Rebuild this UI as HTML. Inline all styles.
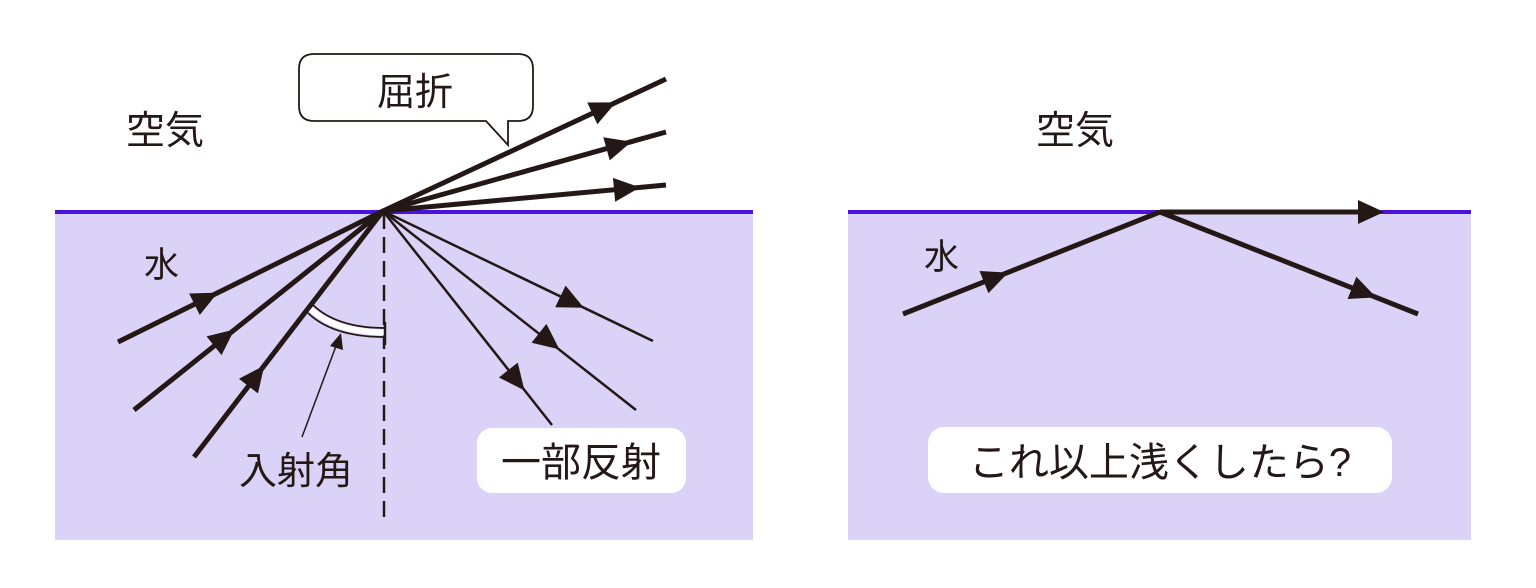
<!DOCTYPE html>
<html><head><meta charset="utf-8"><style>
html,body{margin:0;padding:0;background:#fff;width:1536px;height:588px;overflow:hidden}
svg{display:block}
text{font-family:"Liberation Sans","Noto Sans CJK JP",sans-serif;fill:#231815}
</style></head><body>
<svg width="1536" height="588" viewBox="0 0 1536 588" xmlns="http://www.w3.org/2000/svg">
<defs><polygon id="ah" points="-14,-12 12,0 -14,12" fill="#231815"/></defs>
<rect x="55" y="212" width="698" height="328" fill="#dbd3f7"/>
<rect x="848" y="212" width="623" height="328" fill="#dbd3f7"/>
<line x1="55" y1="212" x2="753" y2="212" stroke="#4b12dc" stroke-width="4"/>
<line x1="848" y1="212" x2="1471" y2="212" stroke="#4b12dc" stroke-width="4"/>

<line x1="384" y1="213" x2="384" y2="520" stroke="#231815" stroke-width="2.5" stroke-dasharray="16,8"/>
<g stroke="#231815" stroke-linecap="butt">
<line x1="118" y1="342" x2="383" y2="211" stroke-width="5"/>
<line x1="134" y1="410" x2="383" y2="211" stroke-width="5"/>
<line x1="194" y1="457" x2="383" y2="211" stroke-width="5"/>
<line x1="383" y1="211" x2="666" y2="79" stroke-width="5"/>
<line x1="383" y1="211" x2="666" y2="132" stroke-width="5"/>
<line x1="383" y1="211" x2="666" y2="185" stroke-width="5"/>
<line x1="383" y1="211" x2="653" y2="341" stroke-width="2.5"/>
<line x1="383" y1="211" x2="636" y2="410" stroke-width="2.5"/>
<line x1="383" y1="211" x2="552" y2="425" stroke-width="2.5"/>
</g>
<use href="#ah" transform="translate(207,298) rotate(-26.3)"/>
<use href="#ah" transform="translate(225,337) rotate(-38.6)"/>
<use href="#ah" transform="translate(257,375) rotate(-52.5)"/>
<use href="#ah" transform="translate(605,107.5) rotate(-25)"/>
<use href="#ah" transform="translate(620,145) rotate(-15.6)"/>
<use href="#ah" transform="translate(628,188.5) rotate(-5.2)"/>
<use href="#ah" transform="translate(573,302.5) rotate(25.7)"/>
<use href="#ah" transform="translate(550,342) rotate(38.2)"/>
<use href="#ah" transform="translate(517,381) rotate(51.7)"/>
<path d="M311,309 Q335,332 385,332.5" fill="none" stroke="#fff" stroke-width="6"/>
<path d="M313,305 Q337,328 385,328" fill="none" stroke="#231815" stroke-width="1.8"/>
<path d="M308,313 Q333,337 385,337" fill="none" stroke="#231815" stroke-width="1.8"/>
<line x1="385" y1="322" x2="385" y2="345" stroke="#231815" stroke-width="2.5"/>
<line x1="302" y1="437" x2="336" y2="346" stroke="#231815" stroke-width="1.5"/>
<polygon points="341,333 343,350 330,346" fill="#231815"/>

<path d="M314,54 H518 Q533,54 533,69 V106 Q533,121 518,121 H508 L508,145 L486,121 H314 Q299,121 299,106 V69 Q299,54 314,54 Z" fill="#fff" stroke="#231815" stroke-width="1.8"/>
<text x="415" y="105" font-size="38" text-anchor="middle">屈折</text>

<text x="126" y="144" font-size="39">空気</text>
<text x="144" y="277" font-size="35">水</text>
<text x="239" y="484" font-size="38">入射角</text>
<rect x="477" y="428" width="209" height="65" rx="15" fill="#fff"/>
<text x="581" y="476" font-size="40" text-anchor="middle">一部反射</text>

<g stroke="#231815" stroke-width="5">
<line x1="903" y1="314" x2="1160" y2="212"/>
<line x1="1160" y1="212" x2="1418" y2="314"/>
<line x1="1160" y1="212" x2="1372" y2="212"/>
</g>
<use href="#ah" transform="translate(997,277) rotate(-21.6)"/>
<use href="#ah" transform="translate(1365,293) rotate(21.6)"/>
<use href="#ah" transform="translate(1372,212)"/>
<text x="1036" y="144" font-size="39">空気</text>
<text x="924" y="269" font-size="35">水</text>
<rect x="928" y="427" width="464" height="66" rx="16" fill="#fff"/>
<text x="1160" y="476" font-size="40" text-anchor="middle">これ以上浅くしたら?</text>
</svg>
</body></html>
